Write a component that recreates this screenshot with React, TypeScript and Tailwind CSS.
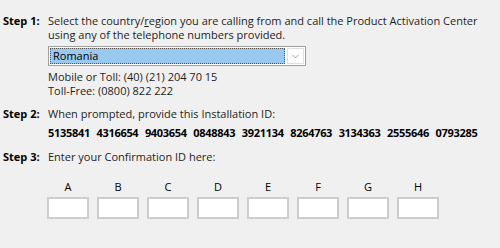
import { ChevronDown } from "lucide-react";

const letters = ["A", "B", "C", "D", "E", "F", "G", "H"];
const installId = ["5135841", "4316654", "9403654", "0848843", "3921134", "8264763", "3134363", "2555646", "0793285"];

function StepLabel({ children }: { children: React.ReactNode }) {
  return <div className="w-[45px] shrink-0 font-bold text-black">{children}</div>;
}

export default function App() {
  return (
    <div
      className="w-[500px] h-[248px] overflow-hidden whitespace-nowrap bg-[#f0f0f0] text-[11px] leading-[14px] text-[#1e1e1e] pl-[3px] pt-[14px]"
      style={{ fontFamily: '"Open Sans", "Noto Sans", sans-serif' }}
    >
      <div className="flex">
        <StepLabel>Step 1:</StepLabel>
        <div className="flex flex-col">
          <p>
            Select the country/<span className="underline">r</span>egion you are calling from and call the Product Activation Center
          </p>
          <p>using any of the telephone numbers provided.</p>
          <div className="mt-[4px] flex h-[20px] w-[258px] items-center border border-[#a0a0a0] bg-white p-px">
            <div className="flex h-full flex-1 items-center border border-dotted border-[#555] bg-[#99c9ef] pl-[2px] text-black">
              Romania
            </div>
            <div className="ml-[2px] flex h-full w-[17px] items-center justify-center border border-[#e0e0e0]">
              <ChevronDown size={11} strokeWidth={1.2} className="text-[#555]" />
            </div>
          </div>
          <div className="mt-[4px] flex flex-col leading-[14px]">
            <span>Mobile or Toll: (40) (21) 204 70 15</span>
            <span>Toll-Free: (0800) 822 222</span>
          </div>
        </div>
      </div>

      <div className="mt-[9px] flex">
        <StepLabel>Step 2:</StepLabel>
        <div className="flex flex-col">
          <p>When prompted, provide this Installation ID:</p>
          <div className="mt-[5px] flex gap-[6.5px] font-bold tracking-[-0.3px] text-black">
            {installId.map((n) => (
              <span key={n}>{n}</span>
            ))}
          </div>
        </div>
      </div>

      <div className="mt-[10px] flex">
        <StepLabel>Step 3:</StepLabel>
        <p>Enter your Confirmation ID here:</p>
      </div>

      <div className="mt-[16px] ml-[44px] flex gap-[8px]">
        {letters.map((l) => (
          <div key={l} className="flex w-[42px] flex-col items-center">
            <span className="text-black">{l}</span>
            <div className="mt-[3px] h-[22px] w-[42px] border-2 border-[#cdcdcd] bg-white" />
          </div>
        ))}
      </div>
    </div>
  );
}
